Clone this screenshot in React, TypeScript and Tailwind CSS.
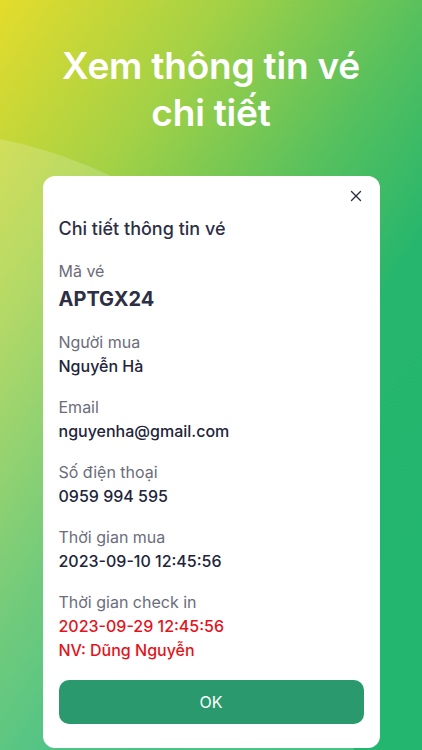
import { X } from 'lucide-react';

type Row = {
  label: string;
  values: string[];
  big?: boolean;
  danger?: boolean;
};

const rows: Row[] = [
  { label: 'Mã vé', values: ['APTGX24'], big: true },
  { label: 'Người mua', values: ['Nguyễn Hà'] },
  { label: 'Email', values: ['nguyenha@gmail.com'] },
  { label: 'Số điện thoại', values: ['0959 994 595'] },
  { label: 'Thời gian mua', values: ['2023-09-10 12:45:56'] },
  { label: 'Thời gian check in', values: ['2023-09-29 12:45:56', 'NV: Dũng Nguyễn'], danger: true },
];

export default function App() {
  return (
    <div
      className="relative w-[422px] h-[750px] overflow-hidden bg-[linear-gradient(125deg,#e4dc2c_0%,#a3d146_24%,#55c05e_46%,#27b66d_62%,#23b66f_85%)]"
      style={{ fontFamily: 'Inter, "Noto Sans", sans-serif' }}
    >
      {/* lighter circle on the left */}
      <div className="absolute left-[-562px] top-[130px] w-[940px] h-[940px] rounded-full bg-white/[0.18]" />

      <div className="relative flex flex-col items-center h-full">
        <h1 className="mt-[42px] text-center text-white font-semibold text-[37px] leading-[47px] tracking-[-0.2px]">
          Xem thông tin vé
          <br />
          chi tiết
        </h1>

        <div className="mt-[40px] w-[337px] flex-1 mb-[2px] bg-white rounded-[12px] px-4 pt-[8px]">
          <div className="flex justify-end">
            <button className="w-6 h-6 flex items-center justify-center text-[#2d2f45] -mr-1">
              <X size={18} strokeWidth={1.8} />
            </button>
          </div>

          <h2 className="mt-[9px] text-[18px] leading-6 font-medium text-[#2d2f45]">Chi tiết thông tin vé</h2>

          <div className="mt-[18px] flex flex-col gap-[17px]">
            {rows.map((row) => (
              <div key={row.label} className="flex flex-col">
                <span className="text-[16px] leading-6 text-[#6b6d7b]">{row.label}</span>
                {row.values.map((v) => (
                  <span
                    key={v}
                    className={
                      row.big
                        ? 'mt-[2px] text-[20px] leading-7 font-bold text-[#2d2f45]'
                        : row.danger
                        ? 'text-[16px] leading-6 font-medium text-[#e3141b]'
                        : 'text-[16px] leading-6 font-medium text-[#22243a]'
                    }
                  >
                    {v}
                  </span>
                ))}
              </div>
            ))}
          </div>

          <button className="mt-[18px] w-full h-[44px] rounded-[10px] bg-[#2a9a6e] text-white text-[16px]">
            OK
          </button>
        </div>
      </div>
    </div>
  );
}
